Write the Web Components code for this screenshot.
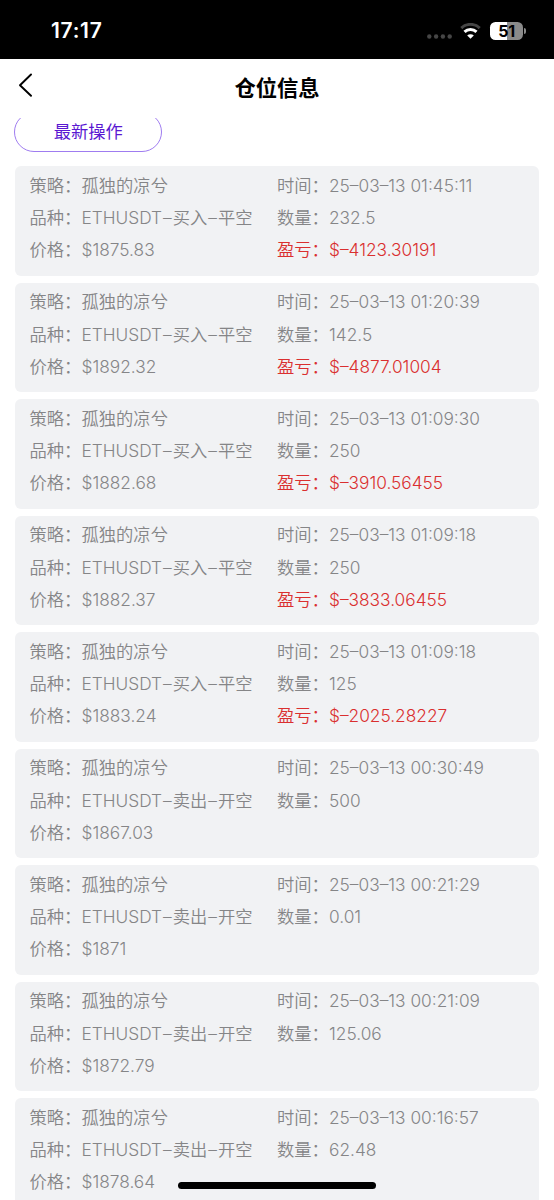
<!DOCTYPE html>
<html lang="zh-CN">
<head>
<meta charset="utf-8">
<title>仓位信息</title>
<style>
  html, body {
    margin: 0;
    height: 1200px;
    overflow: hidden;
    background: #fff;
  }

  body {
    font-family: Inter, "Noto Sans CJK SC", sans-serif;
  }
</style>
</head>
<body>
<position-app></position-app>

<script>
const statusTemplate = document.createElement('template')

statusTemplate.innerHTML = `
  <style>
    :host {
      display: flex;
      justify-content: space-between;
      align-items: center;
      height: 59px;
      box-sizing: border-box;
      padding: 2px 29px 0 51px;
      background: #000;
      color: #fff;
    }

    #time {
      font-size: 21px;
      font-weight: 600;
      line-height: 24px;
      letter-spacing: 0.7px;
      padding-top: 1px;
    }

    #icons {
      display: flex;
      align-items: center;
    }

    #dots {
      margin: 11px 8px 0 1px;
    }

    #wifi {
      margin-right: 9px;
    }

    #battery {
      display: flex;
      align-items: center;
      gap: 1px;
      margin-right: -1px;
    }

    #level {
      width: 33px;
      height: 18px;
      border-radius: 5.5px;
      background: linear-gradient(90deg, #fff 51%, #8a8a8a 51%);
      color: #000;
      font-size: 16px;
      font-weight: 700;
      line-height: 18px;
      text-align: center;
      letter-spacing: -0.3px;
    }

    #cap {
      width: 2px;
      height: 6px;
      border-radius: 0 2px 2px 0;
      background: #8a8a8a;
    }
  </style>
  <span id="time"></span>
  <div id="icons">
    <svg id="dots" width="25" height="5" viewBox="0 0 25 5" fill="#464646">
      <circle cx="2.3" cy="2.5" r="2.2"/>
      <circle cx="9.1" cy="2.5" r="2.2"/>
      <circle cx="15.9" cy="2.5" r="2.2"/>
      <circle cx="22.7" cy="2.5" r="2.2"/>
    </svg>
    <svg id="wifi" width="21" height="16" viewBox="0 0 21 16" fill="none" stroke="#fff" stroke-width="3">
      <path d="M1.3 5.1a13.2 13.2 0 0 1 18.4 0" stroke="#464646"/>
      <path d="M4.5 8.9a8.6 8.6 0 0 1 12 0"/>
      <path d="M10.5 15.8L7.2 12.5a4.7 4.7 0 0 1 6.6 0z" fill="#fff" stroke="none"/>
    </svg>
    <div id="battery">
      <div id="level"></div>
      <div id="cap"></div>
    </div>
  </div>
`

customElements.define('status-bar',
  /**
   * The phone's status bar.
   *
   */
  class extends HTMLElement {
    constructor () {
      super()

      this.attachShadow({ mode: 'open' })
        .appendChild(statusTemplate.content.cloneNode(true))
    }

    connectedCallback () {
      this.shadowRoot.querySelector('#time').textContent = this.getAttribute('time')
      this.shadowRoot.querySelector('#level').textContent = this.getAttribute('battery')
    }
  })

const headerTemplate = document.createElement('template')

headerTemplate.innerHTML = `
  <style>
    :host {
      display: grid;
      grid-template-columns: 60px 1fr 60px;
      align-items: center;
      height: 59px;
      background: #fff;
      color: #000;
    }

    svg {
      margin: -7px 0 0 18px;
    }

    h1 {
      margin: -2px 0 0;
      font-size: 21.3px;
      font-weight: 600;
      line-height: 30px;
      text-align: center;
    }
  </style>
  <svg width="15" height="24" viewBox="0 0 15 24" fill="none" stroke="#000" stroke-width="1.9" stroke-linecap="round" stroke-linejoin="round">
    <path d="M13 1.5L2 12.2L13 22.8"/>
  </svg>
  <h1><slot></slot></h1>
`

customElements.define('page-header',
  /**
   * Title bar with the back arrow.
   *
   */
  class extends HTMLElement {
    constructor () {
      super()

      this.attachShadow({ mode: 'open' })
        .appendChild(headerTemplate.content.cloneNode(true))
    }
  })

const tabTemplate = document.createElement('template')

tabTemplate.innerHTML = `
  <style>
    :host {
      display: flex;
      align-items: center;
      justify-content: center;
      width: 148px;
      height: 40px;
      box-sizing: border-box;
      border: 1px solid #9f7cf0;
      border-radius: 20px;
      color: #5a18d2;
      font-size: 17.3px;
      line-height: 24px;
    }
  </style>
  <slot></slot>
`

customElements.define('pill-tab',
  /**
   * Outlined tab button.
   *
   */
  class extends HTMLElement {
    constructor () {
      super()

      this.attachShadow({ mode: 'open' })
        .appendChild(tabTemplate.content.cloneNode(true))
    }
  })

const fieldTemplate = document.createElement('template')

fieldTemplate.innerHTML = `
  <style>
    :host {
      display: flex;
      height: 32.2px;
      line-height: 32.2px;
      white-space: nowrap;
    }

    :host([loss]) {
      color: #da2f2f;
    }

    #label {
      width: 52px;
    }

    ::slotted(span) {
      padding: 0 1px;
    }
  </style>
  <span id="label"></span>
  <span id="value"><slot></slot></span>
`

customElements.define('trade-field',
  /**
   * A label with its value.
   *
   */
  class extends HTMLElement {
    constructor () {
      super()

      this.attachShadow({ mode: 'open' })
        .appendChild(fieldTemplate.content.cloneNode(true))
    }

    connectedCallback () {
      this.shadowRoot.querySelector('#label').textContent = `${this.getAttribute('label')}\uFF1A`
    }
  })

const cardTemplate = document.createElement('template')

cardTemplate.innerHTML = `
  <style>
    :host {
      display: grid;
      grid-template-columns: 247.5px 1fr;
      align-content: start;
      height: 109.5px;
      box-sizing: border-box;
      padding: 3.6px 15px 0;
      border-radius: 6px;
      background: #f1f2f4;
      color: #858587;
      font-size: 17.3px;
      font-weight: 350;
    }
  </style>
  <slot></slot>
`

customElements.define('trade-card',
  /**
   * Card that lays its fields out in two columns.
   *
   */
  class extends HTMLElement {
    constructor () {
      super()

      this.attachShadow({ mode: 'open' })
        .appendChild(cardTemplate.content.cloneNode(true))
    }
  })

const appTemplate = document.createElement('template')

appTemplate.innerHTML = `
  <style>
    :host {
      display: flex;
      flex-direction: column;
      position: relative;
      height: 1200px;
      overflow: hidden;
    }

    status-bar, page-header {
      flex: none;
    }

    #scroll {
      flex: 1;
      min-height: 0;
      overflow: hidden;
      padding: 0 15px 0 14.5px;
    }

    pill-tab {
      margin: -6px 0 14.4px -0.2px;
    }

    #list {
      display: flex;
      flex-direction: column;
      gap: 7px;
    }

    trade-card {
      flex: none;
    }

    #home {
      position: absolute;
      left: 178px;
      bottom: 11px;
      width: 198px;
      height: 7px;
      border-radius: 4px;
      background: #000;
    }
  </style>
  <status-bar time="17:17" battery="51"></status-bar>
  <page-header>仓位信息</page-header>
  <div id="scroll">
    <pill-tab>最新操作</pill-tab>
    <div id="list"></div>
  </div>
  <div id="home"></div>
`

customElements.define('position-app',
  /**
   * The page with the latest trades.
   *
   */
  class extends HTMLElement {
    /**
     * Time, action, amount, price and profit of each trade.
     *
     * @type {Array}
     */
    #trades = [
      ['01:45:11', '买入–平空', '232.5', '1875.83', '–4123.30191'],
      ['01:20:39', '买入–平空', '142.5', '1892.32', '–4877.01004'],
      ['01:09:30', '买入–平空', '250', '1882.68', '–3910.56455'],
      ['01:09:18', '买入–平空', '250', '1882.37', '–3833.06455'],
      ['01:09:18', '买入–平空', '125', '1883.24', '–2025.28227'],
      ['00:30:49', '卖出–开空', '500', '1867.03'],
      ['00:21:29', '卖出–开空', '0.01', '1871'],
      ['00:21:09', '卖出–开空', '125.06', '1872.79'],
      ['00:16:57', '卖出–开空', '62.48', '1878.64']
    ]

    constructor () {
      super()

      this.attachShadow({ mode: 'open' })
        .appendChild(appTemplate.content.cloneNode(true))

      const list = this.shadowRoot.querySelector('#list')

      for (const [time, action, amount, price, profit] of this.#trades) {
        const card = document.createElement('trade-card')
        this.#addField(card, '策略', '孤独的凉兮')
        this.#addField(card, '时间', `25–03–13 ${time}`)
        this.#addField(card, '品种', `ETHUSDT–${action}`.replaceAll('–', '<span>–</span>'))
        this.#addField(card, '数量', amount)
        this.#addField(card, '价格', `$${price}`)

        if (profit) {
          this.#addField(card, '盈亏', `$${profit}`).setAttribute('loss', '')
        }

        list.appendChild(card)
      }
    }

    /**
     * Add a field to a card.
     *
     * @param {HTMLElement} card - The card to add to.
     * @param {string} label - The label of the field.
     * @param {string} value - The value of the field.
     * @returns {HTMLElement} The new field.
     */
    #addField (card, label, value) {
      const field = document.createElement('trade-field')
      field.setAttribute('label', label)
      field.innerHTML = value
      card.appendChild(field)
      return field
    }
  })
</script>
</body>
</html>
